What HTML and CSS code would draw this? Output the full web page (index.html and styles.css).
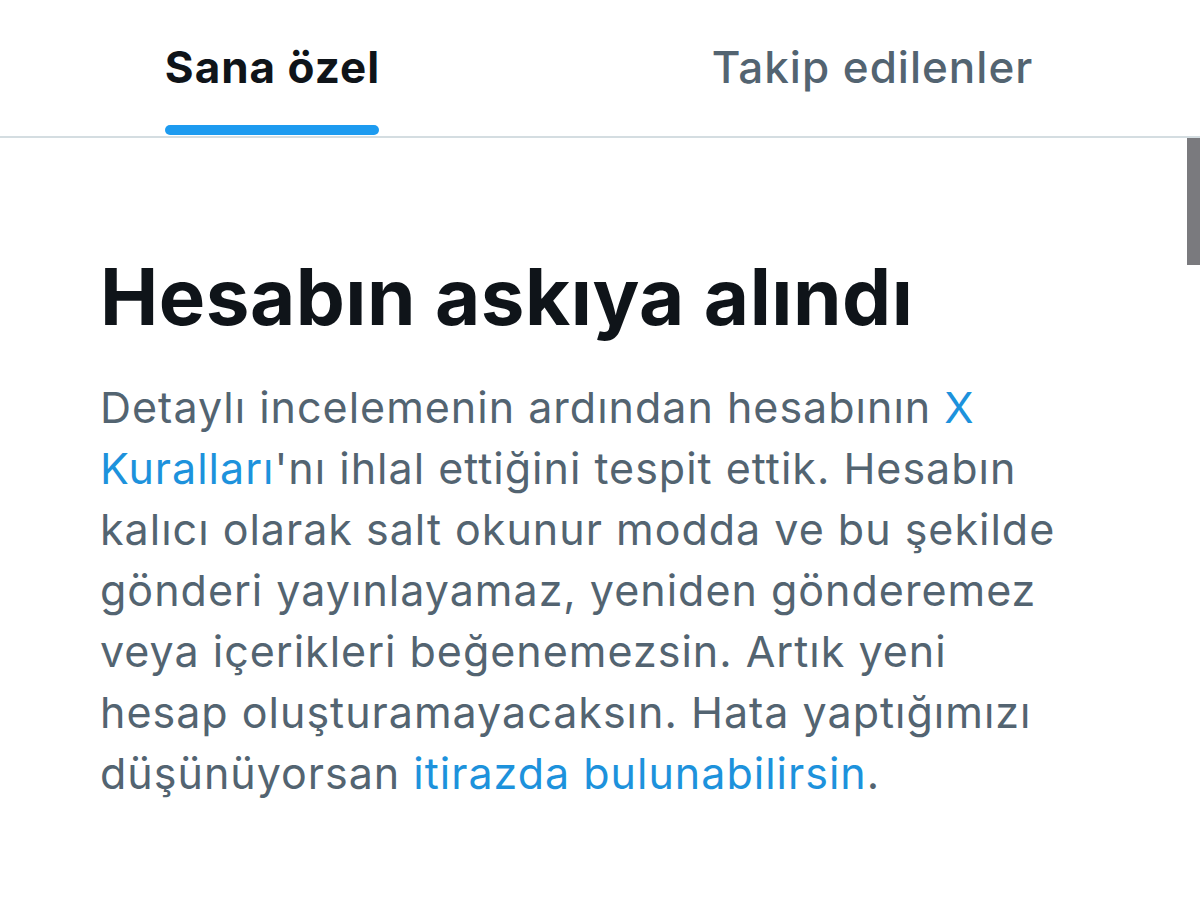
FILE: index.html
```html
<!DOCTYPE html>
<html lang="tr">
<head>
<meta charset="utf-8">
<link rel="stylesheet" href="styles.css">
</head>
<body>
<div class="page">
  <nav class="tabs">
    <div class="tab tab-active"><span class="tab-label">Sana özel<span class="tab-bar"></span></span></div>
    <div class="tab"><span class="tab-label">Takip edilenler</span></div>
  </nav>
  <main class="notice">
    <h1 class="title">Hesabın askıya alındı</h1>
    <p class="text">Detaylı incelemenin ardından hesabının <a class="link">X</a><br><a class="link">Kuralları</a>'nı ihlal ettiğini tespit ettik. Hesabın<br>kalıcı olarak salt okunur modda ve bu şekilde<br>gönderi yayınlayamaz, yeniden gönderemez<br>veya içerikleri beğenemezsin. Artık yeni<br>hesap oluşturamayacaksın. Hata yaptığımızı<br>düşünüyorsan <a class="link">itirazda bulunabilirsin</a>.</p>
  </main>
  <div class="scrollbar"></div>
</div>
</body>
</html>
```

FILE: styles.css
```css
html, body {
  margin: 0;
  padding: 0;
  background: #ffffff;
}
.page {
  position: relative;
  width: 1200px;
  height: 902px;
  overflow: hidden;
  font-family: "Inter", "Liberation Sans", sans-serif;
}
.tabs {
  display: grid;
  grid-template-columns: 545px 1fr;
  height: 136px;
  border-bottom: 2px solid #d4dde1;
  box-sizing: content-box;
}
.tab {
  display: flex;
  justify-content: center;
  align-items: flex-start;
  padding-top: 39px;
  font-size: 44px;
  font-weight: 500;
  letter-spacing: 1px;
  color: #536471;
}
.tab-active {
  font-weight: 700;
  color: #0f1419;
}
.tab-label {
  display: inline-flex;
  flex-direction: column;
  line-height: 56px;
}
.tab-bar {
  display: block;
  height: 10px;
  margin-top: 30px;
  margin-right: 1px;
  border-radius: 5px;
  background: #1d9bf0;
}
.notice {
  padding: 114px 0 0 100px;
}
.title {
  margin: 0;
  font-size: 78px;
  font-weight: 700;
  line-height: 90px;
  letter-spacing: 0.5px;
  color: #0f1419;
}
.text {
  margin: 35px 0 0 0;
  font-size: 43px;
  line-height: 61px;
  letter-spacing: 1px;
  color: #536471;
  white-space: nowrap;
}
.link {
  color: #1d92dc;
  text-decoration: none;
}
.scrollbar {
  position: absolute;
  top: 138px;
  right: 0;
  width: 13px;
  height: 127px;
  background: #7a7a7e;
}
```
